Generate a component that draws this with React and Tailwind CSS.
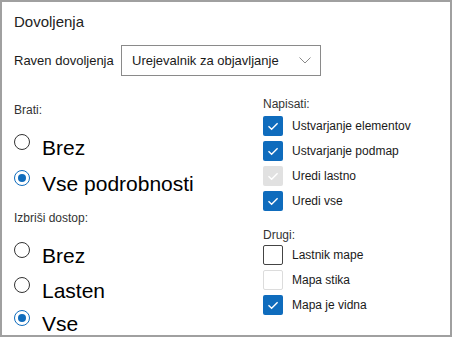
import React from "react";

const FONT = { fontFamily: '"Liberation Sans", Arial, sans-serif' };

const Radio = ({ checked, label, className = "" }) => (
  <div className={`flex items-center h-[36px] ${className}`}>
    <div
      className={`w-4 h-4 rounded-full border flex items-center justify-center shrink-0 ${
        checked ? "border-[#0f6cbd]" : "border-[#333]"
      }`}
    >
      {checked && <div className="w-2 h-2 rounded-full bg-[#0f6cbd]" />}
    </div>
    <span className="ml-[12px] mt-[11px] text-[21px] leading-[24px] text-black">{label}</span>
  </div>
);

const Check = () => (
  <svg width="20" height="20" viewBox="0 0 20 20" className="block">
    <path d="M5.5 10.2 L8.6 13.2 L14.6 7.2" fill="none" stroke="white" strokeWidth="1.4" />
  </svg>
);

const Checkbox = ({ state, label }) => {
  let box = "border border-[#444] bg-white";
  if (state === "checked") box = "bg-[#0f6cbd]";
  if (state === "disabledChecked") box = "bg-[#e1e1e1]";
  if (state === "disabled") box = "border border-[#dcdcdc] bg-white";
  return (
    <div className="flex items-center h-[20px] mb-[5px]">
      <div className={`w-5 h-5 rounded-[2px] shrink-0 ${box}`}>
        {(state === "checked" || state === "disabledChecked") && <Check />}
      </div>
      <span className="ml-[9px] text-[12px] text-[#1a1a1a]">{label}</span>
    </div>
  );
};

export default function App() {
  return (
    <div
      className="w-[452px] h-[337px] bg-white border-2 border-[#a0a0a0] overflow-hidden"
      style={FONT}
    >
      <div className="pl-3 pt-[10px]">
        <div className="text-[15px] leading-[20px] text-[#222]">Dovoljenja</div>

        <div className="flex items-center mt-[13px]">
          <span className="w-[107px] text-[13px] text-[#1a1a1a]">Raven dovoljenja</span>
          <div className="w-[200px] h-[31px] border border-[#8a8a8a] flex items-center justify-between pl-[10px] pr-[9px]">
            <span className="text-[13px] text-[#1a1a1a]">Urejevalnik za objavljanje</span>
            <svg width="12" height="7" viewBox="0 0 12 7">
              <path d="M0.5 0.5 L6 6 L11.5 0.5" fill="none" stroke="#8a8a8a" strokeWidth="1" />
            </svg>
          </div>
        </div>

        <div className="flex">
          <div className="w-[249px]">
            <div className="mt-[26px] text-[12px] leading-[16px] text-[#333]">Brati:</div>
            <Radio label="Brez" className="mt-[6px]" />
            <Radio checked label="Vse podrobnosti" />
            <div className="mt-[14px] text-[12px] leading-[16px] text-[#333]">Izbriši dostop:</div>
            <Radio label="Brez" className="mt-[6px]" />
            <Radio label="Lasten" className="-mt-[1px]" />
            <Radio checked label="Vse" className="-mt-[3px]" />
          </div>
          <div>
            <div className="mt-[20px] text-[12px] leading-[16px] text-[#333]">Napisati:</div>
            <div className="mt-[4px]">
              <Checkbox state="checked" label="Ustvarjanje elementov" />
              <Checkbox state="checked" label="Ustvarjanje podmap" />
              <Checkbox state="disabledChecked" label="Uredi lastno" />
              <Checkbox state="checked" label="Uredi vse" />
            </div>
            <div className="mt-[16px] text-[12px] leading-[16px] text-[#333]">Drugi:</div>
            <div className="mt-[2px]">
              <Checkbox state="unchecked" label="Lastnik mape" />
              <Checkbox state="disabled" label="Mapa stika" />
              <Checkbox state="checked" label="Mapa je vidna" />
            </div>
          </div>
        </div>
      </div>
    </div>
  );
}
